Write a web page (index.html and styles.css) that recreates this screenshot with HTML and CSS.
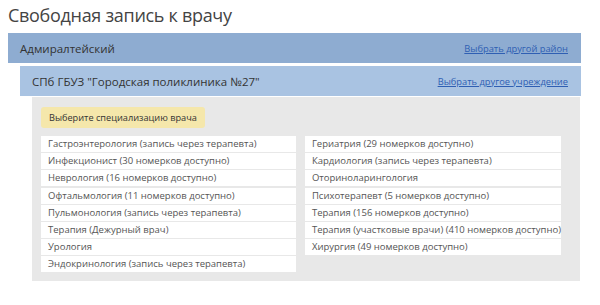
FILE: index.html
```html
<!DOCTYPE html>
<html lang="ru">
<head>
<meta charset="UTF-8">
<meta name="viewport" content="width=device-width, initial-scale=1.0">
<title>Свободная запись к врачу</title>
<link rel="stylesheet" href="styles.css">
</head>
<body>
<h1 class="page-title">Свободная запись к врачу</h1>

<div class="bar bar-district">
    <span class="bar-name">Адмиралтейский</span>
    <a href="#" class="bar-link">Выбрать другой район</a>
</div>

<div class="inner">
    <div class="bar bar-clinic">
        <span class="bar-name">СПб ГБУЗ "Городская поликлиника №27"</span>
        <a href="#" class="bar-link">Выбрать другое учреждение</a>
    </div>

    <div class="panel">
        <div class="hint">Выберите специализацию врача</div>
        <div class="columns">
            <ul class="spec-list">
                <li>Гастроэнтерология (запись через терапевта)</li>
                <li>Инфекционист (30 номерков доступно)</li>
                <li>Неврология (16 номерков доступно)</li>
                <li>Офтальмология (11 номерков доступно)</li>
                <li>Пульмонология (запись через терапевта)</li>
                <li>Терапия (Дежурный врач)</li>
                <li>Урология</li>
                <li>Эндокринология (запись через терапевта)</li>
            </ul>
            <ul class="spec-list">
                <li>Гериатрия (29 номерков доступно)</li>
                <li>Кардиология (запись через терапевта)</li>
                <li>Оториноларингология</li>
                <li>Психотерапевт (5 номерков доступно)</li>
                <li>Терапия (156 номерков доступно)</li>
                <li>Терапия (участковые врачи) (410 номерков доступно)</li>
                <li>Хирургия (49 номерков доступно)</li>
            </ul>
        </div>
    </div>
</div>
</body>
</html>
```

FILE: styles.css
```css
/* Global styles */
body {
    font-family: "Open Sans", "DejaVu Sans", sans-serif;
    margin: 0;
    padding: 0 19px 0 8px;
    background-color: #fff;
    color: #444;
}
.page-title {
    font-size: 18px;
    font-weight: normal;
    color: #444;
    margin: 0;
    padding: 2px 0 0 0;
    height: 31px;
    line-height: 26px;
    letter-spacing: -0.3px;
}
.bar {
    display: flex;
    align-items: center;
    justify-content: space-between;
    height: 30px;
    padding: 0 13px 0 12px;
}
.bar-district {
    background-color: #8eacd1;
}
.bar-clinic {
    background-color: #a9c3e2;
    margin-top: 3px;
}
.bar-name {
    font-size: 11.5px;
    color: #333;
}
.bar-link {
    font-size: 9.3px;
    color: #2f5fb3;
    text-decoration: underline;
}
.inner {
    padding-left: 12px;
}
.panel {
    background-color: #e8e8e8;
    margin: 1px 1px 0 12px;
    padding: 10px 19px 9px 9px;
}
.hint {
    width: fit-content;
    background-color: #f5e7ab;
    font-size: 9.2px;
    color: #333;
    padding: 0 8px;
    height: 21px;
    line-height: 21px;
    border-radius: 3px;
    margin-bottom: 8px;
}
.columns {
    display: grid;
    grid-template-columns: 1fr 1fr;
    gap: 9px;
    align-items: start;
}
.spec-list {
    list-style: none;
    margin: 0;
    padding: 0;
    display: flex;
    flex-direction: column;
    gap: 1.2px;
}
.spec-list li {
    background-color: #fff;
    height: 16px;
    line-height: 16px;
    font-size: 9.5px;
    color: #555;
    padding-left: 7px;
    white-space: nowrap;
}
```
